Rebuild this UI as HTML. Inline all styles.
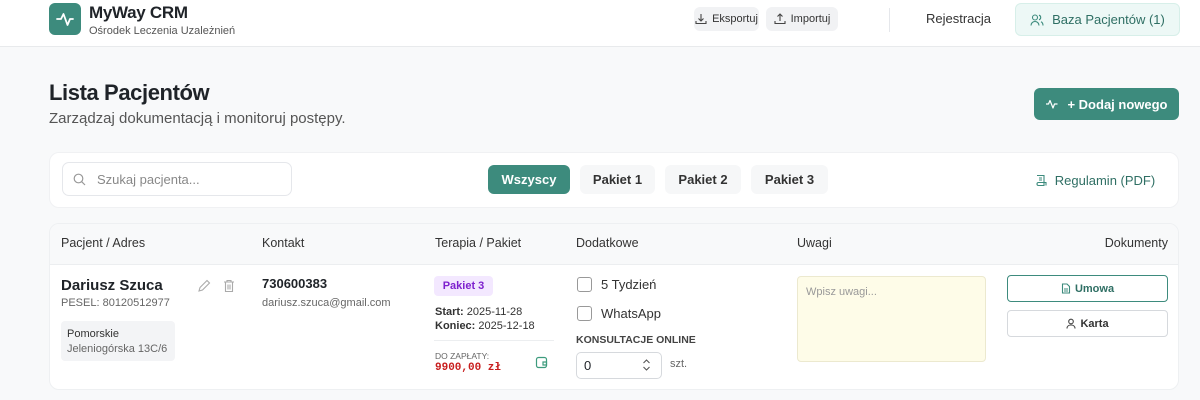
<!DOCTYPE html>
<html><head><meta charset="utf-8"><style>
*{box-sizing:border-box;margin:0;padding:0}
body{width:1200px;height:400px;overflow:hidden;background:#f8f9fa;font-family:"Liberation Sans",sans-serif;color:#1f2328;position:relative}
.a{position:absolute}
.btn{position:absolute;display:flex;align-items:center;justify-content:center;gap:5px;border-radius:6px}
svg{display:block}
</style></head><body>
<div class="a" style="left:0;top:0;width:1200px;height:47px;background:#fff;border-bottom:1px solid #e8eaec"></div>
<div class="a" style="left:49px;top:3px;width:32px;height:32px;background:#3d8b7d;border-radius:6px">
<svg width="32" height="32" viewBox="0 0 32 32"><path d="M8 16h4l2.5-5 4 11 2.5-6h3" fill="none" stroke="#fff" stroke-width="1.8" stroke-linecap="round" stroke-linejoin="round"/></svg></div>
<div class="a" style="left:89px;top:3px;font-size:17px;font-weight:bold;letter-spacing:-0.3px">MyWay CRM</div>
<div class="a" style="left:89px;top:25px;font-size:11px;color:#555">Ośrodek Leczenia Uzależnień</div>
<div class="btn" style="left:694px;top:7px;width:65px;height:24px;background:#f1f2f4;font-size:11px;color:#333">
<svg width="12" height="12" viewBox="0 0 12 12" fill="none" stroke="#444" stroke-width="1.1"><path d="M6 1v7M3.5 5.5L6 8l2.5-2.5M1 8v2.5h10V8"/></svg>Eksportuj</div>
<div class="btn" style="left:766px;top:7px;width:72px;height:24px;background:#f1f2f4;font-size:11px;color:#333">
<svg width="12" height="12" viewBox="0 0 12 12" fill="none" stroke="#444" stroke-width="1.1"><path d="M6 8V1M3.5 3.5L6 1l2.5 2.5M1 8v2.5h10V8"/></svg>Importuj</div>
<div class="a" style="left:889px;top:8px;width:1px;height:24px;background:#e5e7eb"></div>
<div class="a" style="left:926px;top:11px;font-size:13px;color:#333">Rejestracja</div>
<div class="btn" style="left:1015px;top:3px;width:165px;height:33px;background:#edf8f6;border:1px solid #d7efe9;font-size:13px;color:#2f6f64;gap:8px">
<svg width="14" height="14" viewBox="0 0 14 14" fill="none" stroke="#3d8b7d" stroke-width="1.1"><circle cx="5" cy="4.5" r="2.5"/><path d="M1 12.5c0-2.5 2-4 4-4s4 1.5 4 4M9 2.2a2.4 2.4 0 010 4.6M11 8.8c1.3.6 2 1.9 2 3.7"/></svg>Baza Pacjentów (1)</div>

<div class="a" style="left:49px;top:80px;font-size:22px;font-weight:bold;letter-spacing:-0.4px">Lista Pacjentów</div>
<div class="a" style="left:49px;top:110px;font-size:15px;color:#555">Zarządzaj dokumentacją i monitoruj postępy.</div>
<div class="btn" style="left:1034px;top:88px;width:145px;height:32px;background:#3d8b7d;color:#fff;font-size:13px;font-weight:bold;gap:8px">
<svg width="14" height="14" viewBox="0 0 14 14" fill="none" stroke="#fff" stroke-width="1.2" stroke-linejoin="round"><path d="M1 7h2.5l1.5-3.5 3 7.5 1.5-4h3"/></svg>+ Dodaj nowego</div>

<div class="a" style="left:49px;top:152px;width:1130px;height:56px;background:#fff;border-radius:10px;border:1px solid #f0f1f3"></div>
<div class="a" style="left:62px;top:162px;width:230px;height:34px;border:1px solid #e5e7eb;border-radius:7px"></div>
<svg class="a" style="left:73px;top:173px" width="13" height="13" viewBox="0 0 13 13" fill="none" stroke="#999" stroke-width="1.2"><circle cx="5.5" cy="5.5" r="4.3"/><path d="M8.7 8.7L12 12"/></svg>
<div class="a" style="left:97px;top:172px;font-size:13px;color:#888">Szukaj pacjenta...</div>
<div class="btn" style="left:488px;top:165px;width:82px;height:29px;background:#3d8b7d;color:#fff;font-size:13px;font-weight:bold">Wszyscy</div>
<div class="btn" style="left:580px;top:165px;width:75px;height:29px;background:#f6f7f8;font-size:13px;font-weight:bold;color:#333">Pakiet 1</div>
<div class="btn" style="left:665px;top:165px;width:76px;height:29px;background:#f6f7f8;font-size:13px;font-weight:bold;color:#333">Pakiet 2</div>
<div class="btn" style="left:751px;top:165px;width:77px;height:29px;background:#f6f7f8;font-size:13px;font-weight:bold;color:#333">Pakiet 3</div>
<div class="btn" style="left:1030px;top:170px;width:130px;height:20px;font-size:13px;color:#2f6f64;gap:7px">
<svg width="13" height="13" viewBox="0 0 13 13" fill="none" stroke="#3d8b7d" stroke-width="1.1"><path d="M2 1.5h7v10H3.5a1.5 1.5 0 010-3H11v3M4 4h3M4 6h3"/></svg>Regulamin (PDF)</div>

<div class="a" style="left:49px;top:223px;width:1130px;height:167px;background:#fff;border-radius:10px;border:1px solid #eef0f2;overflow:hidden">
<div style="height:41px;background:#f8f9fa;border-bottom:1px solid #eceef0"></div></div>
<div class="a" style="top:236px;left:61px;font-size:12.5px;color:#333">Pacjent / Adres</div>
<div class="a" style="top:236px;left:262px;font-size:12.5px;color:#333">Kontakt</div>
<div class="a" style="top:236px;left:435px;font-size:12.5px;color:#333">Terapia / Pakiet</div>
<div class="a" style="top:236px;left:576px;font-size:12.5px;color:#333">Dodatkowe</div>
<div class="a" style="top:236px;left:797px;font-size:12.5px;color:#333">Uwagi</div>
<div class="a" style="top:236px;right:32px;font-size:12.5px;color:#333">Dokumenty</div>

<div class="a" style="left:61px;top:277px;font-size:15px;font-weight:bold">Dariusz Szuca</div>
<div class="a" style="left:61px;top:297px;font-size:11px;color:#666">PESEL: 80120512977</div>
<svg class="a" style="left:197px;top:279px" width="14" height="14" viewBox="0 0 14 14" fill="none" stroke="#aaa" stroke-width="1.1"><path d="M2 12l1-3.5L10 1.5l2.5 2.5L5.5 11z"/></svg>
<svg class="a" style="left:222px;top:279px" width="14" height="14" viewBox="0 0 14 14" fill="none" stroke="#aaa" stroke-width="1.1"><path d="M2 3h10M5 3V1.5h4V3M3.5 3v9.5h7V3M6 5.5v5M8 5.5v5"/></svg>
<div class="a" style="left:61px;top:321px;width:114px;height:40px;background:#f3f4f6;border-radius:4px;padding:6px 6px;font-size:11px;line-height:15px;color:#333">Pomorskie<br><span style="color:#666">Jeleniogórska 13C/6</span></div>

<div class="a" style="left:262px;top:276px;font-size:13px;font-weight:bold">730600383</div>
<div class="a" style="left:262px;top:297px;font-size:11px;color:#666">dariusz.szuca@gmail.com</div>

<div class="btn" style="left:434px;top:276px;width:59px;height:20px;background:#f3e8ff;color:#7e22ce;font-size:11px;font-weight:bold;border-radius:4px">Pakiet 3</div>
<div class="a" style="left:435px;top:305px;font-size:11px;line-height:14px;color:#333;font-weight:bold"><span>Start:</span> <span style="font-weight:normal">2025-11-28</span><br>Koniec: <span style="font-weight:normal">2025-12-18</span></div>
<div class="a" style="left:434px;top:340px;width:120px;height:1px;background:#eceef0"></div>
<div class="a" style="left:435px;top:351px;font-size:8.5px;color:#666">DO ZAPŁATY:</div>
<div class="a" style="left:435px;top:362px;font-size:11px;font-weight:bold;color:#c81e1e;font-family:'Liberation Mono',monospace">9900,00 zł</div>
<svg class="a" style="left:535px;top:356px" width="13" height="13" viewBox="0 0 13 13" fill="none" stroke="#3d9b7d" stroke-width="1.2"><rect x="1.5" y="1.5" width="10" height="10" rx="2"/><path d="M8 6h3.5v3H8z"/></svg>

<div class="a" style="left:577px;top:277px;width:15px;height:15px;border:1px solid #999;border-radius:3px"></div>
<div class="a" style="left:601px;top:277px;font-size:13px;color:#333">5 Tydzień</div>
<div class="a" style="left:577px;top:306px;width:15px;height:15px;border:1px solid #999;border-radius:3px"></div>
<div class="a" style="left:601px;top:306px;font-size:13px;color:#333">WhatsApp</div>
<div class="a" style="left:576px;top:334px;font-size:10.5px;font-weight:bold;color:#444">KONSULTACJE ONLINE</div>
<div class="a" style="left:576px;top:352px;width:86px;height:27px;border:1px solid #d6d9dd;border-radius:5px;font-size:13px;padding:5px 7px">0</div>
<svg class="a" style="left:642px;top:358px" width="9" height="14" viewBox="0 0 9 14" fill="none" stroke="#555" stroke-width="1.1"><path d="M1.5 5L4.5 2l3 3M1.5 9l3 3 3-3"/></svg>
<div class="a" style="left:670px;top:358px;font-size:11px;color:#666">szt.</div>

<div class="a" style="left:797px;top:276px;width:189px;height:86px;background:#fefce8;border:1px solid #ece9cf;border-radius:4px;padding:9px 8px;font-size:11px;color:#999">Wpisz uwagi...</div>

<div class="btn" style="left:1007px;top:275px;width:161px;height:27px;border:1px solid #3d8b7d;font-size:11px;font-weight:bold;color:#2f6f64;gap:4px;border-radius:4px">
<svg width="10" height="11" viewBox="0 0 10 11" fill="none" stroke="#3d8b7d" stroke-width="1.1"><path d="M1.5 1h4.5l2.5 2.5V10h-7zM3 6h4M3 8h4"/></svg>Umowa</div>
<div class="btn" style="left:1007px;top:310px;width:161px;height:27px;border:1px solid #d6d9dd;font-size:11px;font-weight:bold;color:#333;gap:4px;border-radius:4px">
<svg width="10" height="11" viewBox="0 0 10 11" fill="none" stroke="#444" stroke-width="1.1"><circle cx="5" cy="3.5" r="2.3"/><path d="M1 10.5c0-2.2 1.8-3.5 4-3.5s4 1.3 4 3.5"/></svg>Karta</div>
</body></html>
